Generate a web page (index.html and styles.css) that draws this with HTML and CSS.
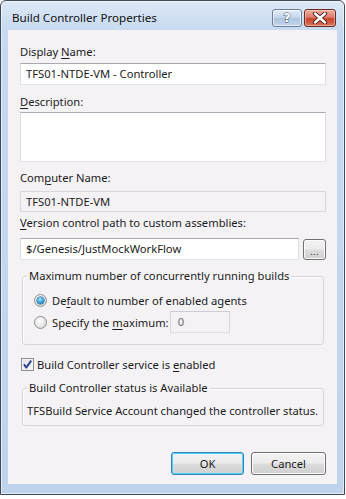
FILE: index.html
```html
<!DOCTYPE html>
<html>
<head>
<meta charset="utf-8">
<link rel="stylesheet" href="styles.css">
</head>
<body>
<div class="window">
  <div class="titlebar">
    <span class="title">Build Controller Properties</span>
    <div class="caption-buttons">
      <span class="cap help"><span class="help-glyph">?</span></span>
      <span class="cap close">
        <svg width="16" height="12" viewBox="0 0 16 12">
          <path d="M3 1.5 L13 10.5 M13 1.5 L3 10.5" stroke="#4a1a12" stroke-width="4.2" stroke-linecap="round"/>
          <path d="M3 1.5 L13 10.5 M13 1.5 L3 10.5" stroke="#ffffff" stroke-width="2.4" stroke-linecap="round"/>
        </svg>
      </span>
    </div>
  </div>
  <div class="client">
    <div class="label">Display <u>N</u>ame:</div>
    <div class="textbox tb-display">TFS01-NTDE-VM - Controller</div>

    <div class="label lbl-desc"><u>D</u>escription:</div>
    <div class="textbox tb-desc"></div>

    <div class="label lbl-comp">Com<u>p</u>uter Name:</div>
    <div class="textbox readonly tb-comp">TFS01-NTDE-VM</div>

    <div class="label lbl-path"><u>V</u>ersion control path to custom assemblies:</div>
    <div class="path-row">
      <div class="textbox tb-path">$/Genesis/JustMockWorkFlow</div>
      <span class="btn ellipsis">...</span>
    </div>

    <fieldset class="group group-max">
      <legend>Maximum number of concurrently running builds</legend>
      <div class="opt-row">
        <span class="radio checked"></span>
        <span>De<u>f</u>ault to number of enabled agents</span>
      </div>
      <div class="opt-row opt-row2">
        <span class="radio"></span>
        <span>Specify the <u>m</u>aximum:</span>
        <span class="textbox readonly tb-max">0</span>
      </div>
    </fieldset>

    <div class="check-row">
      <span class="checkbox">
        <svg width="11" height="11" viewBox="0 0 11 11">
          <path d="M2 5.2 L4.3 8.6 L9.2 1.6" fill="none" stroke="#2b3f93" stroke-width="1.9" stroke-linejoin="round"/>
        </svg>
      </span>
      <span>Build Controller service is <u>e</u>nabled</span>
    </div>

    <fieldset class="group group-status">
      <legend>Build Controller status is Available</legend>
      <div class="status-text">TFSBuild Service Account changed the controller status.</div>
    </fieldset>

    <div class="button-row">
      <span class="btn default ok">OK</span>
      <span class="btn cancel">Cancel</span>
    </div>
  </div>
</div>
</body>
</html>
```

FILE: styles.css
```css
* { box-sizing: border-box; }

html, body {
  margin: 0;
  padding: 0;
  background: #ffffff;
}

body {
  font-family: "Noto Sans", "Open Sans", sans-serif;
  font-size: 11.2px;
  color: #1b1b1b;
}

u { text-decoration: underline; text-underline-offset: 2px; }

.window {
  width: 345px;
  height: 495px;
  border: 1px solid #3e4a5a;
  border-radius: 6px 6px 0 0;
  background: linear-gradient(#dce8f6 0px, #c6d9f0 30px, #bfd3ed 100%);
  box-shadow: inset 0 0 0 1px rgba(255, 255, 255, 0.55);
  display: flex;
  flex-direction: column;
}

.titlebar {
  height: 29px;
  display: flex;
  align-items: flex-start;
  padding: 0 8px 0 11px;
}

.title {
  flex: 1;
  margin-top: 9px;
  line-height: 16px;
  font-size: 11.6px;
  color: #101010;
}

.caption-buttons {
  display: flex;
  gap: 2px;
  margin-top: 8px;
}

.cap {
  height: 18px;
  border-radius: 3px;
  display: flex;
  align-items: center;
  justify-content: center;
}

.help {
  width: 30px;
  border: 1px solid #6c7e97;
  background: linear-gradient(#e3ecf7 0%, #c4d5ea 48%, #aec3de 52%, #c3d5ec 100%);
  box-shadow: inset 0 0 0 1px rgba(255, 255, 255, 0.6);
}

.help-glyph {
  font-family: "DejaVu Sans", sans-serif;
  font-weight: bold;
  font-size: 13px;
  line-height: 14px;
  color: #ffffff;
  -webkit-text-stroke: 0.9px #3f5068;
  paint-order: stroke fill;
}

.close {
  width: 32px;
  border: 1px solid #6b2a20;
  background: linear-gradient(#eeb0a3 0%, #db7c69 45%, #c9452f 55%, #d8735c 100%);
  box-shadow: inset 0 0 0 1px rgba(255, 220, 210, 0.5);
}

.client {
  margin: 0 7px;
  height: 454px;
  background: #f5f2f6;
  padding: 14px 11px 0 12px;
  display: flex;
  flex-direction: column;
}

.label {
  line-height: 16px;
  height: 16px;
}

.textbox {
  background: #ffffff;
  border: 1px solid;
  border-color: #aba7b3 #dfdce5 #e5e3ea #dfdce5;
  padding: 0 5px;
  line-height: 20px;
  height: 22px;
  white-space: nowrap;
}

.tb-display { margin-top: 3px; }

.lbl-desc { margin-top: 9px; }

.tb-desc {
  margin-top: 2px;
  height: 50px;
}

.lbl-comp { margin-top: 8px; }

.readonly {
  background: #f5f2f6;
  border-color: #d9d6de;
}

.tb-comp {
  margin-top: 5px;
  height: 21px;
  line-height: 19px;
}

.lbl-path { margin-top: 3px; }

.path-row {
  margin-top: 7px;
  display: flex;
  align-items: flex-start;
  gap: 4px;
}

.tb-path {
  width: 279px;
}

.btn {
  border: 1px solid #707070;
  border-radius: 3px;
  background: linear-gradient(#f3f3f3 0%, #ebebeb 48%, #dddddd 52%, #cfcfcf 100%);
  box-shadow: inset 0 0 0 1px #fbfbfb;
  display: flex;
  align-items: center;
  justify-content: center;
  color: #1b1b1b;
}

.ellipsis {
  width: 23px;
  height: 21px;
  margin-top: 1px;
  align-items: flex-end;
  font-size: 9px;
  line-height: 9px;
  padding-bottom: 3px;
  letter-spacing: 0.5px;
}

.group {
  margin: 8px 2px 0;
  border: 1px solid #d6d3dc;
  border-radius: 3px;
  min-width: 0;
  box-shadow: inset 1px 1px 0 #ffffff;
}

.group legend {
  padding: 0 2px;
  line-height: 16px;
  height: 16px;
}

.group-max {
  padding: 8px 4px 11px;
}

.opt-row {
  display: flex;
  align-items: center;
  height: 16px;
  margin-left: 7px;
}

.opt-row2 {
  height: 22px;
  margin-top: 3px;
}

.radio {
  flex: none;
  width: 13px;
  height: 13px;
  border-radius: 50%;
  border: 1px solid #8e8f8f;
  background: radial-gradient(circle at 40% 35%, #ffffff 0%, #eeeeee 40%, #cfcfcf 100%);
  margin-right: 5px;
  position: relative;
}

.radio.checked::after {
  content: "";
  position: absolute;
  left: 2px;
  top: 2px;
  width: 7px;
  height: 7px;
  border-radius: 50%;
  background: radial-gradient(circle at 45% 35%, #b9ecff 0%, #36a8e3 45%, #0e5f98 100%);
  box-shadow: 0 0 0 0.5px #14507c;
}

.tb-max {
  margin-left: 1px;
  width: 60px;
  height: 22px;
  padding: 0 7px;
  color: #6d6d6d;
  border-color: #cfcbd4 #dcd9e0 #e2dfe6 #dcd9e0;
}

.check-row {
  margin-top: 11px;
  height: 16px;
  display: flex;
  align-items: center;
}

.checkbox {
  flex: none;
  width: 13px;
  height: 13px;
  margin-left: 1px;
  margin-right: 3px;
  border: 1px solid #8f8f8f;
  background: linear-gradient(135deg, #e0e0e0, #fafafa);
  box-shadow: inset 0 0 0 1px #f4f4f4;
  display: flex;
  align-items: center;
  justify-content: center;
}

.group-status {
  padding: 7px 4px 6px;
}

.status-text {
  line-height: 16px;
  height: 16px;
  white-space: nowrap;
}

.button-row {
  margin-top: 26px;
  display: flex;
  justify-content: flex-end;
  gap: 7px;
}

.button-row .btn {
  height: 23px;
  line-height: 21px;
}

.ok {
  width: 73px;
}

.cancel {
  width: 75px;
}

.default {
  border-color: #3c7fb1;
  box-shadow: inset 0 0 0 1px #48d6ff;
}
```
